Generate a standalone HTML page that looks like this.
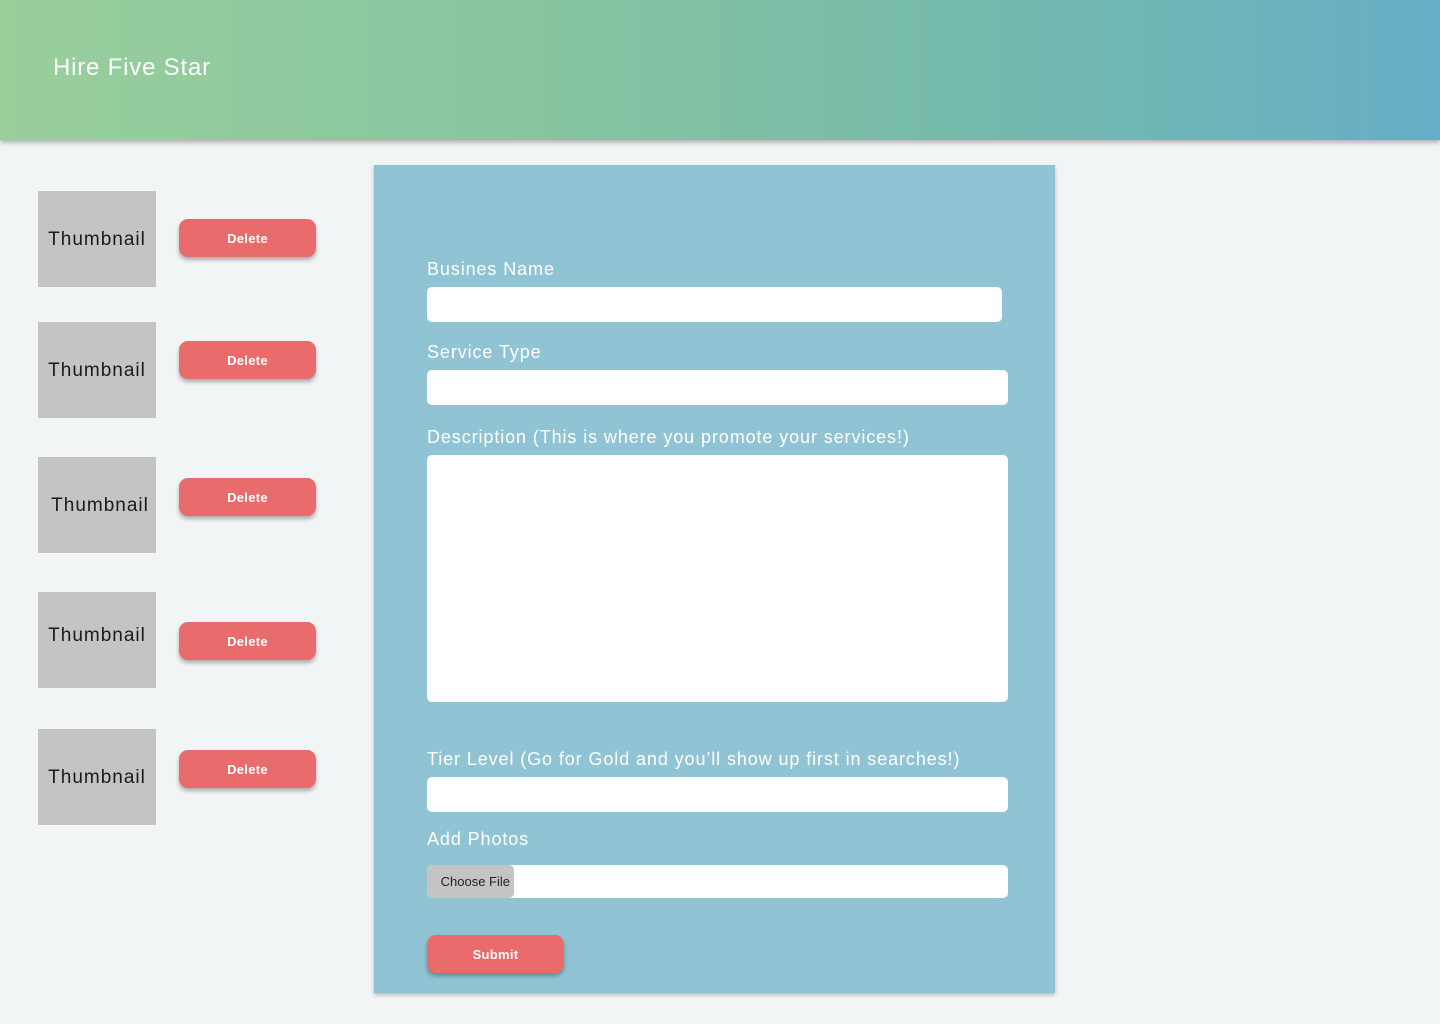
<!DOCTYPE html>
<html><head><meta charset="utf-8"><style>
*{box-sizing:border-box;margin:0;padding:0}
body{width:1440px;height:1024px;background:#f2f5f6;font-family:"Liberation Sans",sans-serif;position:relative;overflow:hidden}
.hdr{position:absolute;left:0;top:0;width:1440px;height:140px;background:linear-gradient(90deg,#9acf9c 0%,#85c4a0 40%,#74b9ae 70%,#65aec6 100%);box-shadow:0 3px 4px rgba(0,0,0,.25)}
.hdr span{position:absolute;left:53px;top:54px;color:#fff;font-size:24px;font-weight:300;letter-spacing:0.8px}
.th{position:absolute;left:38px;width:118px;height:96px;background:#c4c4c4;color:#1a1a1a;font-size:19px;letter-spacing:1px;display:flex;align-items:center;justify-content:center;padding-top:2px}
.del{position:absolute;left:179px;width:137px;height:38px;background:#ea6b6b;border-radius:9px;box-shadow:0 3px 4px rgba(0,0,0,.3);color:#fff;font-weight:bold;font-size:13px;letter-spacing:0.3px;display:flex;align-items:center;justify-content:center}
.panel{position:absolute;left:374px;top:165px;width:681px;height:828px;background:#90c4d4;box-shadow:0 2px 4px rgba(0,0,0,.25)}
.lbl{position:absolute;left:427px;color:#fff;font-size:18px;font-weight:300;letter-spacing:0.9px}
.in{position:absolute;left:427px;width:581px;background:#fff;border-radius:5px}
</style></head><body>
<div class="hdr"><span>Hire Five Star</span></div>
<div class="th" style="top:191px">Thumbnail</div>
<div class="th" style="top:322px">Thumbnail</div>
<div class="th" style="top:457px;padding-left:6px">Thumbnail</div>
<div class="th" style="top:592px;align-items:flex-start;padding-top:33px">Thumbnail</div>
<div class="th" style="top:729px">Thumbnail</div>
<div class="del" style="top:219px">Delete</div>
<div class="del" style="top:341px">Delete</div>
<div class="del" style="top:478px">Delete</div>
<div class="del" style="top:622px">Delete</div>
<div class="del" style="top:750px">Delete</div>
<div class="panel"></div>
<div class="lbl" style="top:259px">Busines Name</div>
<div class="in" style="top:287px;height:35px;width:575px"></div>
<div class="lbl" style="top:342px">Service Type</div>
<div class="in" style="top:370px;height:35px"></div>
<div class="lbl" style="top:427px">Description (This is where you promote your services!)</div>
<div class="in" style="top:455px;height:247px"></div>
<div class="lbl" style="top:749px">Tier Level (Go for Gold and you’ll show up first in searches!)</div>
<div class="in" style="top:777px;height:35px"></div>
<div class="lbl" style="top:829px">Add Photos</div>
<div class="in" style="top:865px;height:33px;overflow:hidden"><div style="width:87px;height:33px;background:#c4c4c4;border-radius:5px;color:#222;font-size:13px;display:flex;align-items:center;justify-content:flex-end;padding-right:4px">Choose File</div></div>
<div class="del" style="left:427px;top:935px">Submit</div>
</body></html>
